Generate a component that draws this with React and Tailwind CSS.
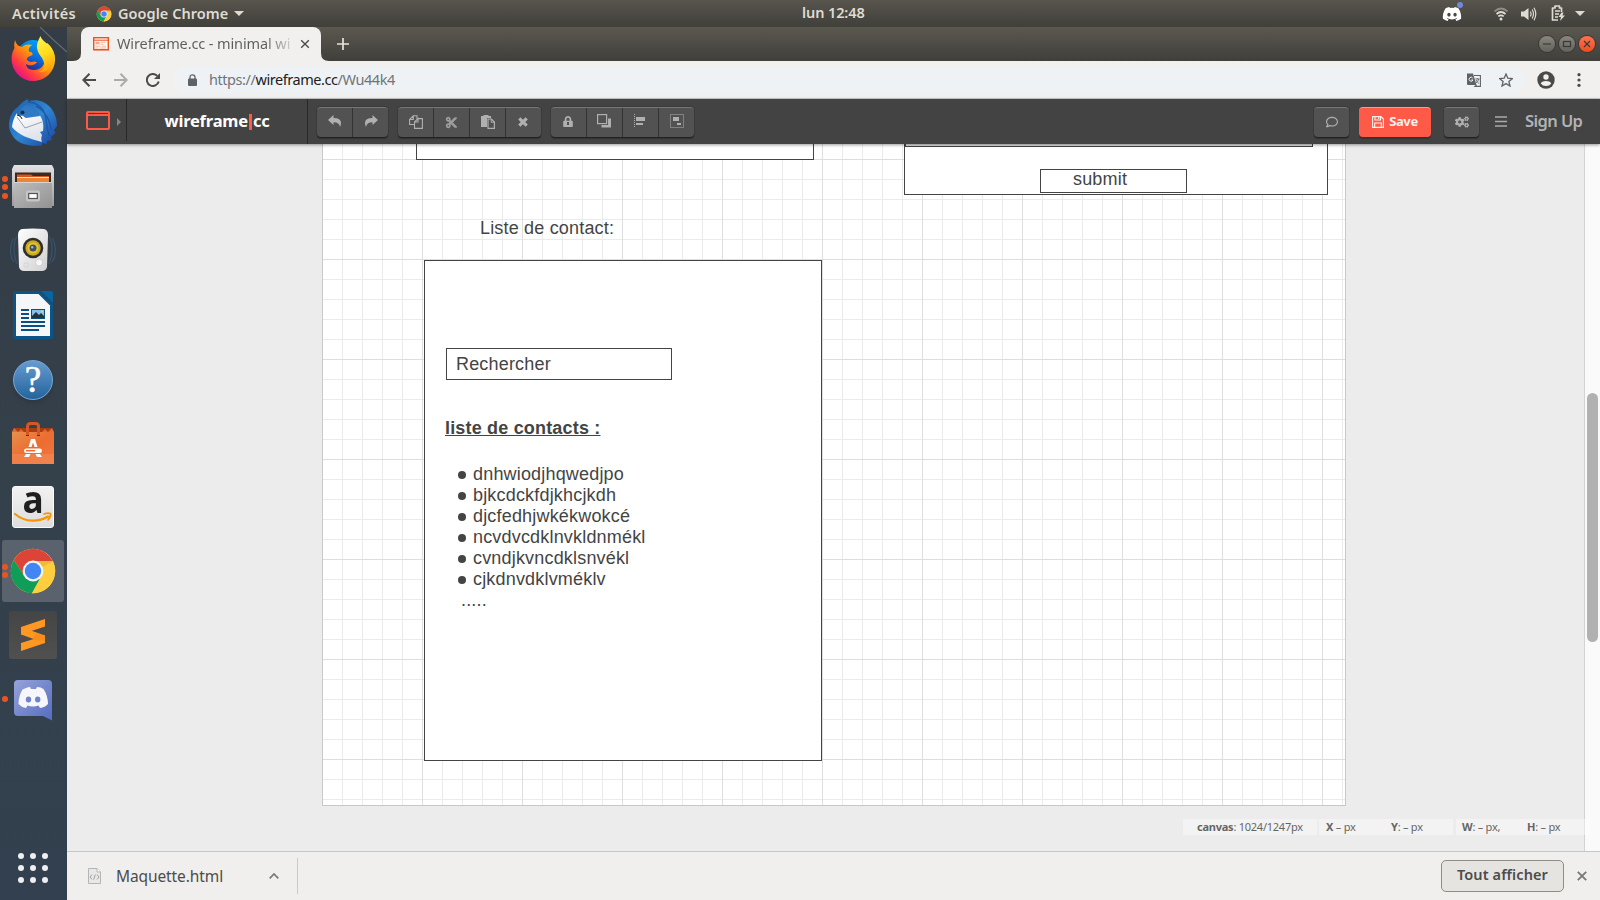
import React from "react";
import { FaCut, FaCogs, FaRegComment, FaLock, FaDiscord } from "react-icons/fa";

const contacts = [
  "dnhwiodjhqwedjpo",
  "bjkcdckfdjkhcjkdh",
  "djcfedhjwkékwokcé",
  "ncvdvcdklnvkldnmékl",
  "cvndjkvncdklsnvékl",
  "cjkdnvdklvméklv",
];

function ChromeLogo({ className }) {
  return (
    <svg viewBox="0 0 48 48" className={className}>
      <circle cx="24" cy="24" r="22.2" fill="#ffcd40" />
      <path d="M4.8 12.9A22.2 22.2 0 0 1 43.9 14.2H24L15.5 29Z" fill="#db4437" />
      <path d="M4.8 12.9A22.2 22.2 0 0 0 23 46.2L32.6 29L24 24L15.5 29Z" fill="#0f9d58" />
      <path d="M43.9 14.2A22.2 22.2 0 0 1 23 46.2L32.5 29L24 14.2Z" fill="#ffcd40" />
      <path d="M24 14.2H43.9L33.5 20Z" fill="#c9a020" opacity=".35" />
      <circle cx="24" cy="24" r="10.4" fill="#f4f4f4" />
      <circle cx="24" cy="24" r="8.2" fill="#4285f4" />
    </svg>
  );
}

function Firefox() {
  return (
    <svg viewBox="0 0 48 48" className="size-12">
      <defs>
        <linearGradient id="ffBody" x1="0.85" y1="0.1" x2="0.15" y2="0.85">
          <stop offset="0" stopColor="#fff14a" />
          <stop offset=".3" stopColor="#ffb900" />
          <stop offset=".55" stopColor="#ff7a18" />
          <stop offset=".8" stopColor="#ff3647" />
          <stop offset="1" stopColor="#e31587" />
        </linearGradient>
        <linearGradient id="ffGlobe" x1="0.7" y1="0" x2="0.3" y2="1">
          <stop offset="0" stopColor="#00a5f5" />
          <stop offset=".5" stopColor="#0a6fe0" />
          <stop offset="1" stopColor="#2a1a80" />
        </linearGradient>
        <linearGradient id="ffFlame" x1="0.3" y1="0" x2="0.6" y2="1">
          <stop offset="0" stopColor="#fff44f" />
          <stop offset=".5" stopColor="#ffdc1e" />
          <stop offset="1" stopColor="#ff9a0a" />
        </linearGradient>
      </defs>
      <circle cx="24" cy="21" r="16" fill="url(#ffGlobe)" />
      <path d="M6 5C5 9 5 11 5.500 13C2.500 18 2 23 3 28C5 38 13 46 24 46C36 46 46 37 46 24C46 18 43 12 38 8L37 22C36 31 31 35 25 35C20 35 17 32 17 29C20 31 24 31 28 27.500C25 25 22 29 18 25C17.500 22 20 21.500 23.500 20C24 18 23 17 20 16.500C19 14 21 11 23.500 10C18 8.500 15 10 13 12L9 10.500C7.500 9 6.500 7 6 5Z" fill="url(#ffBody)" />
      <path d="M31.500 1C29 6 27 10 28.500 15C29.500 20 34 22 35 28C36 33 33 36 29 37C37 38 44 33 45.500 25C46.500 18 42 11 36 7C33.500 5 32 3 31.500 1Z" fill="url(#ffFlame)" />
    </svg>
  );
}

function Thunderbird() {
  return (
    <svg viewBox="0 0 48 48" className="size-12">
      <defs>
        <linearGradient id="tbBody" x1="0" y1="0" x2="1" y2="1">
          <stop offset="0" stopColor="#1a5aa8" />
          <stop offset=".5" stopColor="#2f86d2" />
          <stop offset="1" stopColor="#1b3f9a" />
        </linearGradient>
        <linearGradient id="tbMail" x1="0" y1="0" x2="0.4" y2="1">
          <stop offset="0" stopColor="#ffffff" />
          <stop offset="1" stopColor="#dfe3ea" />
        </linearGradient>
      </defs>
      <path d="M20 0C15 1 12 4 9 8C2 12 0 20 0 27C1 37 9 45 19 46C24 47 28 47 33 46.500L33 44L38 45L38 42L43 41L42 38L46.500 34L45 31L48 27C48 16 43 7 34 3C30 1 24 .5 18.500 2.500Z" fill="url(#tbBody)" />
      <path d="M19 3C26 3 33 7 36 15C38 22 37 31 41 37M27 7C35 11 41 20 42 31" fill="none" stroke="#194d9d" strokeWidth="1.500" opacity=".7" />
      <path d="M8 17L30.500 16C34 20 35 27 34 32L31 33L33 36C32 39 32 41 33 43C21 40 9 36 3 28C3.500 23 5 18 8 14Z" fill="url(#tbMail)" />
      <path d="M8 18L16 29L33 23" fill="none" stroke="#8f97a4" strokeWidth=".9" />
      <path d="M17 6C24 8 30 12 31 17L17 19C13 17 11 13 13 9Z" fill="#3079c4" />
      <circle cx="13.500" cy="13.500" r="2" fill="#1b2e45" />
      <path d="M9 16L12 18L13 20" stroke="#222" strokeWidth="1" fill="none" />
    </svg>
  );
}

function Files() {
  return (
    <svg viewBox="0 0 48 48" className="size-12">
      <defs>
        <linearGradient id="fiA" x1="0" y1="0" x2="0" y2="1">
          <stop offset="0" stopColor="#e3e3e3" />
          <stop offset="1" stopColor="#9b9b9b" />
        </linearGradient>
        <linearGradient id="fiB" x1="0" y1="0" x2="1" y2="1">
          <stop offset="0" stopColor="#bdbdbd" />
          <stop offset="1" stopColor="#929292" />
        </linearGradient>
      </defs>
      <path d="M5 2H43L45 6V43H3V6Z" fill="url(#fiA)" />
      <rect x="6" y="9.500" width="36" height="11" fill="#3a2a24" />
      <path d="M8 11.500H22L24 13H40V20H8Z" fill="#d9541c" />
      <rect x="8" y="14" width="32" height="1" fill="#f6e2c2" />
      <rect x="8" y="15" width="32" height="5" fill="#ee8434" />
      <path d="M7 19H41L43 20V45H5V20Z" fill="url(#fiB)" />
      <rect x="5" y="19" width="38" height="1" fill="#d4d4d4" />
      <rect x="17" y="27.500" width="14" height="11" rx="2" fill="#c6c6c6" />
      <rect x="19.700" y="30.500" width="8.600" height="5" fill="#fff" stroke="#555" strokeWidth="1.200" />
    </svg>
  );
}

function Speaker() {
  return (
    <svg viewBox="0 -1 48 48" className="size-12">
      <defs>
        <linearGradient id="spA" x1="0" y1="0" x2="1" y2="1">
          <stop offset="0" stopColor="#ffffff" />
          <stop offset="1" stopColor="#cfcfcf" />
        </linearGradient>
      </defs>
      <g fill="none" stroke="#3e638e" strokeWidth="1.300" opacity=".5">
        <path d="M8 8C4 15 4 26 8 36M4.500 10C.5 18 .5 28 5 34M40 8C44 15 44 26 40 36M43.500 10C47.500 18 47.500 28 43 34" />
      </g>
      <path d="M13 1Q24 0 35 1Q39 2 39 7L38 39Q37 43 33 43H15Q11 43 10 39L9 7Q9 2 13 1Z" fill="url(#spA)" />
      <circle cx="24" cy="20" r="10.300" fill="#2e2e2e" />
      <circle cx="24" cy="20" r="7.700" fill="#c9a820" />
      <circle cx="24" cy="20" r="5.500" fill="#e1c631" />
      <circle cx="24" cy="20" r="3.500" fill="#465060" />
      <circle cx="23.200" cy="19.200" r="1.200" fill="#a9b3bf" />
      <circle cx="30" cy="34.500" r="3.500" fill="#f7f7f7" stroke="#bdbdbd" strokeWidth=".6" />
      <path d="M15 35h4v4h-4z" fill="none" stroke="#ccc" strokeWidth=".6" />
    </svg>
  );
}

function Writer() {
  return (
    <svg viewBox="0 0 48 48" className="size-12">
      <path d="M6 0H31L44 13V46Q44 48 42 48H6Q4 48 4 46V2Q4 0 6 0Z" fill="#0b5488" />
      <path d="M32 0H42Q44 0 44 2V12Z" fill="#0765a3" />
      <path d="M7 3H29.500L41 14.500V45H7Z" fill="#f4f6f7" />
      <g fill="#0b4f80">
        <rect x="12" y="18" width="8" height="2" />
        <rect x="12" y="22" width="8" height="2" />
        <rect x="12" y="26" width="8" height="2" />
        <rect x="12" y="30" width="24" height="2" />
        <rect x="12" y="34" width="24" height="2" />
        <rect x="12" y="38" width="18" height="2" />
        <rect x="22" y="18" width="14" height="10" />
      </g>
      <rect x="23" y="19" width="12" height="8" fill="#87c1ea" />
      <path d="M23 27V25L27 21L30 24L32 22L35 25V27Z" fill="#25333c" />
      <circle cx="33" cy="20.500" r="1" fill="#ffd54a" />
    </svg>
  );
}

function Help() {
  return (
    <span className="mt-0.5 flex size-10 items-center justify-center rounded-full border border-[#78a9d4] bg-linear-to-b from-[#659bd0] to-[#23649d] pb-0.5 font-['Liberation_Serif',serif] text-[37px] leading-none text-white shadow-md [-webkit-text-stroke:0.600px_white]">
      ?
    </span>
  );
}

function Software() {
  return (
    <svg viewBox="0 0 48 48" className="size-12">
      <defs>
        <linearGradient id="swA" x1="0" y1="0" x2="1" y2="1">
          <stop offset="0" stopColor="#e5904c" />
          <stop offset=".5" stopColor="#ed6c30" />
          <stop offset="1" stopColor="#ee7a44" />
        </linearGradient>
      </defs>
      <path d="M3 13L5 9H43L45 13Z" fill="#a63e14" />
      <path d="M3 13L5 9L9 13L12 10L15 13Z" fill="#e46a30" />
      <path d="M45 13L43 9L39 13L36 10L33 13Z" fill="#e46a30" />
      <path d="M18.500 16V8Q18.500 4.500 21.500 4.500H26.500Q29.500 4.500 29.500 8V16" fill="none" stroke="#d65723" strokeWidth="3" />
      <path d="M3 13H17V17H20V13H28V17H31V13H45V45H3Z" fill="url(#swA)" />
      <rect x="3" y="35" width="42" height="10" fill="#f28a56" opacity=".6" />
      <path d="M22 20H26L28.500 28H25.500L24 23.500L22.500 28H19.500Z" fill="#fff" />
      <rect x="15" y="29.500" width="18" height="4.500" rx="2.200" fill="#fff" />
      <path d="M17 31.700H26" stroke="#ed6c30" strokeWidth="1.500" />
      <path d="M17 35H21.500L20 38H15ZM26.500 35H31L33 38H28Z" fill="#fff" />
    </svg>
  );
}

function Amazon() {
  return (
    <span className="relative flex h-[42px] w-[42px] items-start justify-center rounded-[3px] border border-[#fafafa] bg-linear-to-b from-[#f1f1f1] to-[#dedede] font-['Open_Sans',sans-serif] text-[37px] leading-[25px] font-bold text-[#1f1f1f]">
      <span className="-mt-px scale-x-95">a</span>
      <svg viewBox="0 0 42 42" className="absolute -top-px -left-px size-[42px]">
        <path d="M3 28C14 37 27 36 36 30.500" fill="none" stroke="#f99500" strokeWidth="2.200" strokeLinecap="round" />
        <path d="M32 28Q36 26.500 38.500 27.500Q39 31 36 34" fill="none" stroke="#f99500" strokeWidth="1.700" strokeLinecap="round" />
      </svg>
    </span>
  );
}

function Sublime() {
  return (
    <span className="flex size-12 rounded-[3px] bg-linear-to-b from-[#454545] to-[#505050]">
      <svg viewBox="0 0 48 48" className="size-12">
        <path d="M12 16L36 8V15.500L12 23.500Z" fill="#ff9822" />
        <path d="M12 16L36 24.500V32L12 23.500Z" fill="#ff9822" />
        <path d="M12 32L36 24.500V32L12 40Z" fill="#ff9822" />
        <path d="M22 28.500L28 22L36 24.500V30Z" fill="#e97a10" opacity=".35" />
      </svg>
    </span>
  );
}

function DiscordApp() {
  return (
    <svg viewBox="0 0 48 48" className="size-12">
      <defs>
        <linearGradient id="dcA" x1="0" y1="0" x2="1" y2="1">
          <stop offset="0" stopColor="#96a3da" />
          <stop offset="1" stopColor="#556cbf" />
        </linearGradient>
      </defs>
      <path d="M9 5H39Q43 5 43 9V45.500L34 41H9Q5 41 5 37V9Q5 5 9 5Z" fill="url(#dcA)" />
      <path d="M17 13Q20 11.800 21 12L22 14H27L28 12Q32 12 34.500 14Q39 21 39 29Q36 32.500 31 33L29.500 30.500Q24 32.500 18.500 30.500L17 33Q12 32 9.500 29Q9.500 21 13.500 14.500Z" fill="#f6f6fa" />
      <ellipse cx="19.500" cy="24.500" rx="2.700" ry="3" fill="#6f82cb" />
      <ellipse cx="28.700" cy="24.500" rx="2.700" ry="3" fill="#6f82cb" />
    </svg>
  );
}

const dock = [
  { id: "firefox", icon: <Firefox />, dots: 0 },
  { id: "thunderbird", icon: <Thunderbird />, dots: 0 },
  { id: "files", icon: <Files />, dots: 3 },
  { id: "rhythmbox", icon: <Speaker />, dots: 0 },
  { id: "writer", icon: <Writer />, dots: 0 },
  { id: "help", icon: <Help />, dots: 0 },
  { id: "software", icon: <Software />, dots: 0 },
  { id: "amazon", icon: <Amazon />, dots: 0 },
  { id: "chrome", icon: <ChromeLogo className="size-12" />, dots: 2, active: true },
  { id: "sublime", icon: <Sublime />, dots: 0 },
  { id: "discord", icon: <DiscordApp />, dots: 1 },
];

function Dock() {
  return (
    <aside className="relative flex w-[67px] shrink-0 flex-col justify-between bg-linear-to-b from-[#343c45] via-[#34404a] to-[#32404f]">
      <svg viewBox="0 0 67 40" className="absolute top-0 left-0 h-10 w-[67px]">
        <path d="M40 0Q52 12 67 25" fill="none" stroke="#636b71" strokeWidth="1.200" />
      </svg>
      <div className="relative flex flex-col">
        {dock.map((item) => (
          <div key={item.id} className="flex h-16 items-center">
            <span className="z-10 flex w-2 flex-col items-end gap-[2.500px]">
              {Array.from({ length: item.dots }, (_, i) => (
                <i key={i} className="size-1.5 rounded-full bg-[#e95420]" />
              ))}
            </span>
            <span
              className={
                item.active
                  ? "-ml-1.5 flex h-[62px] w-[62px] items-center justify-center rounded-[3px] bg-[#5a636d]"
                  : "-ml-1.5 flex h-[62px] w-[62px] items-center justify-center"
              }
            >
              {item.icon}
            </span>
          </div>
        ))}
      </div>
      <div className="mb-[17px] ml-[18px] grid w-[30px] grid-cols-3 gap-1.5">
        {Array.from({ length: 9 }, (_, i) => (
          <i key={i} className="size-1.5 rounded-full bg-[#efefef]" />
        ))}
      </div>
    </aside>
  );
}

function SystemBar() {
  return (
    <header className="flex h-[27px] shrink-0 items-center bg-linear-to-b from-[#58554d] to-[#403f3a] text-[14.500px] font-semibold text-[#dfdbd2]">
      <div className="flex w-[802px] items-center">
        <span className="ml-3 w-[84px] tracking-[0.400px]">Activités</span>
        <ChromeLogo className="size-4" />
        <span className="ml-1.5 w-[116px] tracking-[0.050px]">Google Chrome</span>
        <svg viewBox="0 0 10 5" className="h-[5px] w-2.5"><path d="M0 0H10L5 5Z" fill="#dfdbd2" /></svg>
      </div>
      <span className="-mt-px tracking-[-0.100px]">lun 12:48</span>
      <div className="flex flex-1 items-center justify-end pr-[15px]">
        <span className="relative mr-[32px] flex">
          <FaDiscord className="size-5 text-white" />
          <i className="absolute -top-0.5 -right-px size-1.5 rounded-full bg-[#7289da]" />
        </span>
        <svg viewBox="0 0 14 14" className="mr-[13px] size-3.5" fill="none" stroke="#dfdbd2" strokeWidth="1.700">
          <path d="M.5 4.500Q7-1.500 13.500 4.500" opacity=".45" />
          <path d="M2.500 7Q7 3 11.500 7M4.300 9.400Q7 7.200 9.700 9.400" />
          <circle cx="7" cy="12" r="1.500" fill="#dfdbd2" stroke="none" />
        </svg>
        <svg viewBox="0 0 16 14" className="mr-3.5 h-3.5 w-4">
          <path d="M0 4.500H3L7.500 1V13L3 9.500H0Z" fill="#dfdbd2" />
          <path d="M9.300 4.500Q10.800 7 9.300 9.500M11.200 2.500Q13.700 7 11.200 11.500M13 .8Q16.600 7 13 13.200" fill="none" stroke="#dfdbd2" strokeWidth="1.200" />
        </svg>
        <svg viewBox="0 0 14 16" className="mr-2.5 -mt-px h-4 w-3.5">
          <path d="M10.500 7V3H8.500V1H4V3H1.500V15H7" fill="none" stroke="#dfdbd2" strokeWidth="1.700" strokeLinejoin="round" />
          <path d="M4 6h5M4 9h4M4 12h3" stroke="#dfdbd2" strokeWidth="1.400" />
          <path d="M10.500 7.500L7.500 12H10L9 16L14 10.500H11.500L12.500 7.500Z" fill="#dfdbd2" />
        </svg>
        <svg viewBox="0 0 10 5" className="h-[5px] w-2.5"><path d="M0 0H10L5 5Z" fill="#dfdbd2" /></svg>
      </div>
    </header>
  );
}

function TabStrip() {
  return (
    <div className="flex h-[34px] shrink-0 bg-linear-to-b from-[#5b5850] to-[#403f3a]">
      <svg viewBox="0 0 14 34" className="h-[34px] w-3.5"><path d="M6 34Q14 34 14 26V34Z" fill="#f1f0ee" /></svg>
      <div className="flex h-[34px] w-60 items-center rounded-t-lg bg-[#f1f0ee]">
        <svg viewBox="0 0 16 14" className="ml-3 h-3.5 w-4">
          <path d="M1 13.500h15" stroke="#f4c4b4" />
          <rect x=".7" y=".7" width="14.600" height="12" fill="#fff6f2" stroke="#f0501e" strokeWidth="1.400" />
          <path d="M1 3.200H15" stroke="#f0501e" />
          <rect x="2.500" y="4.800" width="4" height="2.500" fill="#f7a58a" />
          <path d="M7.500 5.300h5M7.500 7.300h3M2.500 9.200h5M9 9.200h4M2.500 11h3M7 11h6" stroke="#f7b9a3" />
        </svg>
        <span className="ml-2 w-[176px] overflow-hidden bg-linear-to-r from-[#5c5c5c] from-84% to-transparent to-103% bg-clip-text text-[14.500px] tracking-[-0.110px] whitespace-nowrap text-transparent">
          Wireframe.cc - minimal wi
        </span>
        <svg viewBox="0 0 10 10" className="ml-[7px] size-2.5"><path d="M1.200 1.200L8.800 8.800M8.800 1.200L1.200 8.800" stroke="#4c4c4c" strokeWidth="1.400" /></svg>
      </div>
      <svg viewBox="0 0 8 34" className="h-[34px] w-2"><path d="M8 34Q0 34 0 26V34Z" fill="#f1f0ee" /></svg>
      <svg viewBox="0 0 12 12" className="mt-[11px] ml-2 size-3"><path d="M6 0V12M0 6H12" stroke="#e6e3dc" strokeWidth="1.700" /></svg>
      <div className="mt-[9px] mr-[5px] ml-auto flex h-4 gap-1">
        <WindowButton><path d="M4 8H12" /></WindowButton>
        <WindowButton><rect x="4.500" y="5.500" width="7" height="5" /></WindowButton>
        <WindowButton close><path d="M5 5L11 11M11 5L5 11" /></WindowButton>
      </div>
    </div>
  );
}

function WindowButton({ children, close }) {
  return (
    <span
      className={
        close
          ? "size-4 rounded-full bg-linear-to-b from-[#fb7350] to-[#f04a1c] ring-1 ring-[#383733]"
          : "size-4 rounded-full bg-linear-to-b from-[#88867f] to-[#64625c] ring-1 ring-[#383733]"
      }
    >
      <svg viewBox="0 0 16 16" className="size-4" fill="none" stroke="#3a3935" strokeWidth="1.200">
        {children}
      </svg>
    </span>
  );
}

function AddressBar() {
  return (
    <div className="flex h-[38px] shrink-0 items-center border-b border-[#c9cccb] bg-[#f1f0ee]">
      <svg viewBox="0 0 14 14" className="ml-[15px] size-3.5" fill="none" stroke="#4b4b4b" strokeWidth="2"><path d="M14 7H1.500M7.500 .8L1.300 7L7.500 13.200" /></svg>
      <svg viewBox="0 0 14 14" className="ml-[18px] size-3.5" fill="none" stroke="#aaa" strokeWidth="2"><path d="M0 7H12.500M6.500 .8L12.700 7L6.500 13.200" /></svg>
      <svg viewBox="0 0 14 14" className="ml-[18px] size-3.5" fill="none" stroke="#4b4b4b" strokeWidth="2">
        <path d="M12.700 8.500A6 6 0 1 1 11.300 2.900" /><path d="M14 0V6H8Z" fill="#4b4b4b" stroke="none" />
      </svg>
      <div className="ml-3.5 flex h-7 flex-1 items-center rounded-full bg-[#eff2f4] pl-[14px]">
        <svg viewBox="0 0 9 12" className="h-3 w-[9px]"><rect y="4.500" width="9" height="7.500" rx="1" fill="#5f6368" /><path d="M2 5V3.200Q2 .8 4.500 .8Q7 .8 7 3.200V5" fill="none" stroke="#5f6368" strokeWidth="1.300" /></svg>
        <span className="ml-3 text-[14.500px] tracking-[-0.440px] text-[#70757a]">
          https://<span className="text-[#202124]">wireframe.cc</span>/Wu44k4
        </span>
        <span className="mr-[11px] ml-auto flex items-center gap-[18px]">
          <svg viewBox="0 0 14 14" className="size-3.5">
            <path d="M0 .5H6L9.500 12H1Q0 12 0 11Z" fill="#5f6368" />
            <path d="M7 2.500H13.400V13.400H8L9.500 12" fill="none" stroke="#5f6368" strokeWidth="1.100" />
            <path d="M5.700 5A2 2 0 1 0 6 7H4.300" fill="none" stroke="#eff2f4" />
            <path d="M8.200 6H12.500M10.300 5V6M11.800 6Q11 9 8.800 10M9 7Q10 9 12 10.500" fill="none" stroke="#5f6368" strokeWidth=".9" />
          </svg>
          <svg viewBox="0 0 14 14" className="size-3.5"><path d="M7 1L8.800 5.200L13.400 5.600L9.900 8.500L11 13L7 10.600L3 13L4.100 8.500L.6 5.600L5.200 5.200Z" fill="none" stroke="#5f6368" strokeWidth="1.300" /></svg>
        </span>
      </div>
      <svg viewBox="0 0 18 18" className="mr-[22px] ml-[13px] size-[18px]">
        <circle cx="9" cy="9" r="8.700" fill="#4a4a4a" />
        <circle cx="9" cy="6" r="2.700" fill="#f1f0ee" />
        <path d="M3.800 12.500Q4.500 10 9 10Q13.500 10 14.200 12.500Q12.500 15 9 15Q5.500 15 3.800 12.500Z" fill="#f1f0ee" />
      </svg>
      <svg viewBox="0 0 4 14" className="mr-[19px] h-3.5 w-1" fill="#4a4a4a"><circle cx="2" cy="1.700" r="1.600" /><circle cx="2" cy="7" r="1.600" /><circle cx="2" cy="12.300" r="1.600" /></svg>
    </div>
  );
}

function ToolGroup({ children }) {
  return (
    <div className="flex h-[30px] divide-x divide-[#333] overflow-hidden rounded-[4px] border-t border-[#777] bg-[#525252] shadow-[0_1px_0_#222,0_2px_1px_#333,0_0_0_1px_#3b3b3b]">
      {React.Children.map(children, (c) => (
        <span className="flex w-9 items-center justify-center text-[#b0b0b0] last:w-[35px]">{c}</span>
      ))}
    </div>
  );
}

function AppHeader() {
  return (
    <div className="z-10 flex h-[45px] shrink-0 items-center bg-[#434343] shadow-[0_1px_3px_rgba(0,0,0,0.4)]">
      <div className="flex h-full w-[59px] items-center">
        <svg viewBox="0 0 24 19" className="mt-[-3px] ml-[19px] h-[19px] w-6">
          <rect x="1" y="1" width="22" height="17" rx="1" fill="none" stroke="#ff5a47" strokeWidth="2" />
          <path d="M1 4H23" stroke="#ff5a47" strokeWidth="2" />
          <path d="M3.500 2.500h1.300M6.500 2.500h1.300" stroke="#434343" strokeWidth="1.400" />
        </svg>
        <svg viewBox="0 0 4 8" className="ml-[7px] h-2 w-1"><path d="M0 0L4 4L0 8Z" fill="#858585" /></svg>
      </div>
      <div className="mb-[3px] h-[42px] w-px bg-[#282828]" />
      <div className="flex w-[180px] justify-center text-[16.500px] font-bold tracking-[-0.200px] text-white">
        <span className="flex items-center">wireframe<i className="mx-[1px] h-4 w-[3px] bg-[#ff5a47]" />cc</span>
      </div>
      <div className="mr-[9px] h-full w-px bg-[#282828]" />
      <div className="flex gap-2.5">
        <ToolGroup>
          <svg viewBox="0 0 14 12" className="-mt-0.5 h-3 w-3.5"><path d="M0 5L5.500 0V3Q13 3 13 8Q13 10 12 12Q11.500 7.300 5.500 7.300V10Z" fill="currentColor" /></svg>
          <svg viewBox="0 0 14 12" className="-mt-0.5 h-3 w-3.5"><path d="M14 5L8.500 0V3Q1 3 1 8Q1 10 2 12Q2.500 7.300 8.500 7.300V10Z" fill="currentColor" /></svg>
        </ToolGroup>
        <ToolGroup>
          <svg viewBox="0 0 14 14" className="-mt-px size-3.5" fill="none" stroke="currentColor" strokeWidth="1.100">
            <path d="M5 9.500H.6V4.500L4.300.8H8V4M4.300.8V4.500H.6" /><path d="M9 3.600H13.400V13.400H5.500V7L9 3.600V7H5.500" />
          </svg>
          <FaCut className="size-[13px] opacity-80" />
          <svg viewBox="0 0 14 14" className="-mt-px size-3.5">
            <path d="M0 1H2.500V0H7.500V1H10V3H6V12H0Z" fill="currentColor" />
            <path d="M7 4H10.500L13.400 7V13.400H7Z" fill="#525252" stroke="currentColor" strokeWidth="1.200" /><path d="M10.200 4V7.200H13.400" fill="none" stroke="currentColor" />
          </svg>
          <svg viewBox="0 0 10 10" className="mr-px size-2.5"><path d="M1.300 1.300L8.700 8.700M8.700 1.300L1.300 8.700" stroke="currentColor" strokeWidth="3.200" /></svg>
        </ToolGroup>
        <ToolGroup>
          <span className="relative mr-px flex -translate-y-px"><FaLock className="h-[11px] w-2.5" /><i className="absolute top-1.5 left-1 h-[3px] w-0.5 bg-[#525252]" /></span>
          <svg viewBox="0 0 14 14" className="mr-0.5 -mt-0.5 size-3.5"><rect x=".6" y=".6" width="9" height="9" fill="none" stroke="currentColor" strokeWidth="1.200" /><path d="M11 4.500H14V13.500H4.500V11H11Z" fill="currentColor" /></svg>
          <svg viewBox="0 0 12 14" className="mr-0.5 -mt-0.5 h-3.5 w-3"><path d="M.5 0V14" stroke="currentColor" strokeDasharray="1 1" /><path d="M2 3H11V7H2ZM2 9H9V11H2Z" fill="currentColor" /></svg>
          <svg viewBox="0 0 14 14" className="-mt-0.5 size-3.5"><rect x=".5" y=".5" width="13" height="13" fill="none" stroke="currentColor" strokeDasharray="1 1" /><path d="M3 3H9V7H3ZM7 9H11V11H7Z" fill="currentColor" /></svg>
        </ToolGroup>
      </div>
      <div className="ml-auto flex items-center">
        <ToolGroup><FaRegComment className="h-3 w-3.5" /></ToolGroup>
        <button className="mr-[13px] ml-2.5 flex h-[30px] w-[72px] items-center justify-center gap-[5px] rounded-[4px] border-t border-[#ff9a8c] bg-[#ff5a47] text-[13px] font-bold tracking-[-0.400px] text-[#fff0ed] shadow-[0_2px_1px_#333]">
          <svg viewBox="0 0 12 12" className="-mt-px size-3" fill="none" stroke="currentColor" strokeWidth="1.100"><path d="M.6.6H9L11.400 3V11.400H.6ZM3 .6V4H8.500V.6M2.700 11.400V7H9.300V11.400M6.700 1V3" /></svg>
          Save
        </button>
        <ToolGroup><FaCogs className="size-3.5" /></ToolGroup>
        <svg viewBox="0 0 12 11" className="mr-[18px] ml-4 h-[11px] w-3"><path d="M0 1H12M0 5.500H12M0 10H12" stroke="#aaa" strokeWidth="1.500" /></svg>
        <span className="w-[75px] text-[16.500px] font-semibold tracking-[-0.600px] text-[#b2b2b2]">Sign Up</span>
      </div>
    </div>
  );
}

function Canvas() {
  return (
    <div className="relative h-[662px] w-[1024px] overflow-hidden border-x border-b border-[#c8c8c8] bg-white bg-[linear-gradient(to_right,transparent_99px,#dedede_99px),linear-gradient(to_bottom,transparent_99px,#dedede_99px),linear-gradient(to_right,transparent_19px,#ebebeb_19px),linear-gradient(to_bottom,transparent_19px,#ebebeb_19px)] bg-[size:100px_100px,100px_100px,20px_20px,20px_20px] bg-[position:0_16px,0_16px,0_16px,0_16px] font-['Liberation_Sans',Arial,sans-serif] text-[18px] leading-[21px] tracking-[0.180px] text-[#444]">
      <div className="absolute -top-10 left-[93px] h-14 w-[398px] border border-[#444] bg-white" />
      <div className="absolute -top-10 left-[581px] h-[91px] w-[424px] border border-[#444] bg-white" />
      <div className="absolute -top-10 left-[582px] h-[43px] w-[408px] border border-[#444] bg-[#e0e0e0]" />
      <div className="absolute top-[25px] left-[717px] h-6 w-[147px] border border-[#444] bg-white pl-8 leading-[19px]">submit</div>
      <div className="absolute top-[74px] left-[157px]">Liste de contact:</div>
      <div className="absolute top-[116px] left-[101px] h-[501px] w-[398px] border border-[#444] bg-white px-5">
        <div className="mt-[87px] ml-px h-8 w-[226px] border border-[#444] pl-[9px] leading-[31px]">Rechercher</div>
        <div className="mt-[38px] font-bold"><u className="decoration-1 underline-offset-1">liste de contacts :</u></div>
        <ul className="mt-[25px] ml-[13px]">
          {contacts.map((name) => (
            <li key={name} className="flex h-[21px] items-center">
              <i className="mr-[7px] size-2 rounded-full bg-[#444]" />
              {name}
            </li>
          ))}
          <li className="pl-[3px]">.....</li>
        </ul>
      </div>
    </div>
  );
}

function StatusBar() {
  return (
    <div className="absolute right-[10px] bottom-4 flex h-4 text-[11px] leading-4 tracking-[-0.240px] whitespace-nowrap text-[#666]">
      <div className="mr-0.5 w-[134px] bg-white/40 pl-3.5"><b>canvas</b>: 1024/1247px</div>
      <div className="mr-[3px] flex w-[134px] bg-white/40 pl-[7px]">
        <span className="w-[65px]"><b>X</b> – px</span>
        <span><b>Y</b>: – px</span>
      </div>
      <div className="flex w-[134px] bg-white/40 pl-1.5">
        <span className="w-[65px]"><b>W</b>: – px,</span>
        <span><b>H</b>: – px</span>
      </div>
    </div>
  );
}

function DownloadBar() {
  return (
    <footer className="flex h-[49px] shrink-0 items-center border-t border-[#c6c6c6] bg-[#f0efed] text-[15.500px] text-[#4c4c4c]">
      <svg viewBox="0 0 13 16" className="-mt-px ml-[21px] h-4 w-[13px]">
        <path d="M.5.5H9L12.500 4V15.500H.5Z" fill="#e8e8e8" stroke="#b5b5b5" /><path d="M9 .5V4H12.500" fill="#fff" stroke="#b5b5b5" />
        <path d="M4 6.500L2 9L4 11.500M9 6.500L11 9L9 11.500M7.300 6.500L5.700 11.500" fill="none" stroke="#999" strokeWidth=".9" />
      </svg>
      <span className="mt-0.5 ml-[15px] w-[153px] tracking-[-0.100px]">Maquette.html</span>
      <svg viewBox="0 0 10 6" className="h-1.5 w-2.5"><path d="M.7 5.300L5 1L9.300 5.300" fill="none" stroke="#777" strokeWidth="1.700" /></svg>
      <div className="ml-[18px] h-9 w-px bg-[#c9c9c9]" />
      <button className="mr-[13px] ml-auto h-8 w-[123px] rounded-[5px] border border-[#8f8d89] bg-[#e6e4e1] pb-0.5 text-[14.500px] font-semibold tracking-[0.100px]">Tout afficher</button>
      <svg viewBox="0 0 10 10" className="mr-[13px] size-2.5"><path d="M.8.8L9.200 9.200M9.200.8L.8 9.200" stroke="#777" strokeWidth="1.800" /></svg>
    </footer>
  );
}

export default function App() {
  return (
    <div className="flex h-[900px] w-[1600px] flex-col overflow-hidden font-['Noto_Sans',sans-serif]">
      <SystemBar />
      <div className="flex min-h-0 flex-1">
        <Dock />
        <main className="flex min-w-0 flex-1 flex-col">
          <TabStrip />
          <AddressBar />
          <AppHeader />
          <div className="relative flex min-h-0 flex-1 bg-[#ececec]">
            <div className="flex flex-1 pl-[255px]"><Canvas /></div>
            <div className="w-4 border-l border-[#d3d3d3] bg-[#fafafa] pt-[249px] pl-0.5">
              <div className="h-[249px] w-[11px] rounded-full bg-[#b1b1b1]" />
            </div>
            <StatusBar />
          </div>
          <DownloadBar />
        </main>
      </div>
    </div>
  );
}
